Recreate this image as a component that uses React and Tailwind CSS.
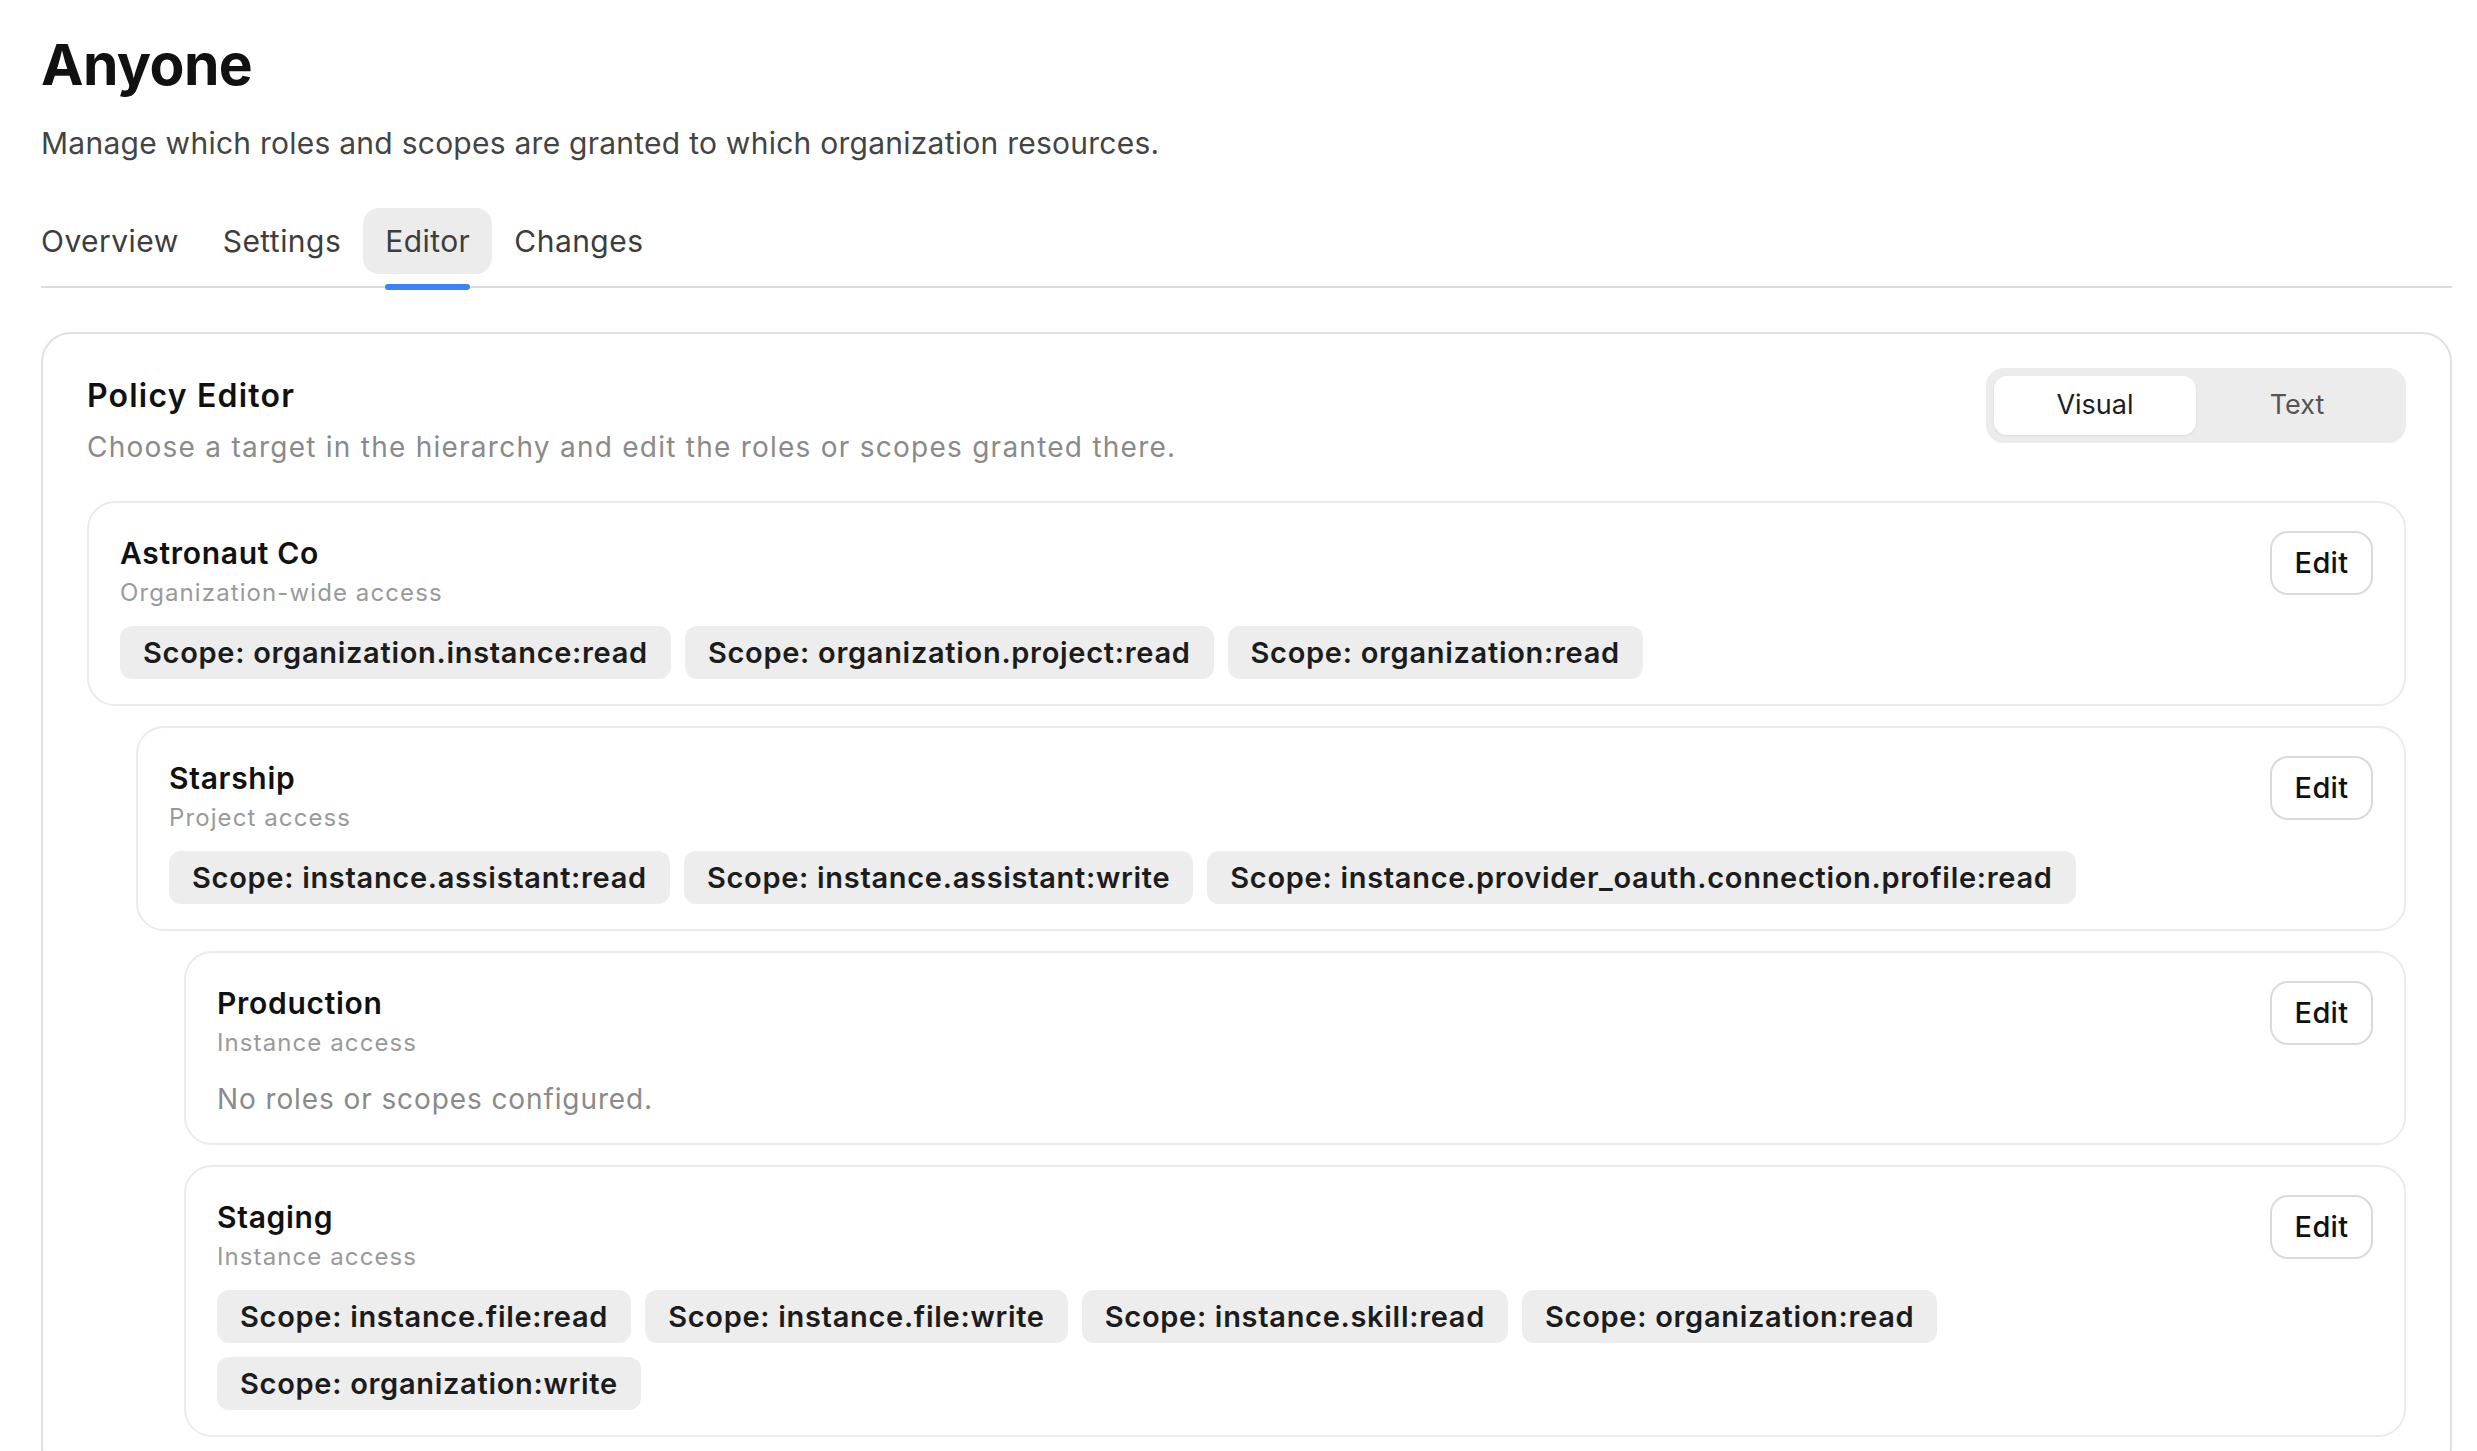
const tabs = ['Overview', 'Settings', 'Editor', 'Changes'];

const nodes = [
  {
    name: 'Astronaut Co',
    kind: 'Organization-wide access',
    level: 0,
    scopes: ['organization.instance:read', 'organization.project:read', 'organization:read'],
  },
  {
    name: 'Starship',
    kind: 'Project access',
    level: 1,
    scopes: [
      'instance.assistant:read',
      'instance.assistant:write',
      'instance.provider_oauth.connection.profile:read',
    ],
  },
  { name: 'Production', kind: 'Instance access', level: 2, scopes: [] },
  {
    name: 'Staging',
    kind: 'Instance access',
    level: 2,
    scopes: [
      'instance.file:read',
      'instance.file:write',
      'instance.skill:read',
      'organization:read',
      'organization:write',
    ],
  },
];

const indent = ['ml-0', 'ml-[49px]', 'ml-[97px]'];

function NodeCard({ node }) {
  return (
    <div
      className={`${indent[node.level]} flex items-start gap-[24px] rounded-[28px] border-2 border-[#ebebeb] bg-white px-[31px] pt-[30px] pb-[25px]`}
    >
      <div className="min-w-0 flex-1">
        <div className="text-[30px] leading-[40px] font-semibold tracking-[0.7px] text-[#111]">{node.name}</div>
        <div className="mt-[4px] text-[24px] leading-[32px] tracking-[1.1px] text-[#9a9a9a]">{node.kind}</div>
        {node.scopes.length ? (
          <div className="mt-[17px] flex flex-wrap gap-[14px]">
            {node.scopes.map((s) => (
              <span
                key={s}
                className="flex h-[53px] items-center rounded-[12px] bg-[#ededed] px-[23px] text-[29px] font-semibold tracking-[0.7px] text-[#1c1c1c]"
              >
                Scope: {s}
              </span>
            ))}
          </div>
        ) : (
          <p className="mt-[21px] text-[28px] leading-[38px] tracking-[0.9px] text-[#8a8a8a]">
            No roles or scopes configured.
          </p>
        )}
      </div>
      <button className="-mt-[2px] h-[64px] w-[103px] shrink-0 rounded-[18px] border-2 border-[#dadada] bg-white text-[29px] font-medium tracking-[0.3px] text-[#111]">
        Edit
      </button>
    </div>
  );
}

export default function App() {
  return (
    <div className="min-h-screen bg-white pt-[30px] pr-[25px] pl-[41px] font-['Inter','Noto_Sans',sans-serif] text-[#111]">
      <h1 className="text-[57px] leading-[70px] font-bold tracking-[-0.6px]">Anyone</h1>
      <p className="mt-[23px] text-[30px] leading-[40px] tracking-[0.25px] text-[#444]">
        Manage which roles and scopes are granted to which organization resources.
      </p>

      <nav className="mt-[45px] border-b-2 border-[#dcdcdc] pb-[12px]">
        <div className="-ml-[22px] flex">
          {tabs.map((t) => (
            <div
              key={t}
              className={`relative flex h-[66px] items-center rounded-[16px] px-[22px] text-[30px] tracking-[0.45px] text-[#3d3d3d] ${
                t === 'Editor' ? 'bg-[#ececec]' : ''
              }`}
            >
              {t}
              {t === 'Editor' && (
                <span className="absolute right-[22px] -bottom-[16px] left-[22px] h-[6px] rounded-full bg-[#3b82f6]" />
              )}
            </div>
          ))}
        </div>
      </nav>

      <section className="mt-[44px] rounded-[30px] border-2 border-[#e0e0e0] px-[44px] pt-[33px] pb-[40px]">
        <div className="flex items-start justify-between">
          <div>
            <h2 className="mt-[9px] text-[32px] leading-[40px] font-semibold tracking-[1.2px]">Policy Editor</h2>
            <p className="mt-[12px] text-[28px] leading-[38px] tracking-[1.25px] text-[#8a8a8a]">
              Choose a target in the hierarchy and edit the roles or scopes granted there.
            </p>
          </div>
          <div className="mt-[1px] flex h-[75px] w-[420px] rounded-[18px] bg-[#ececec] p-[8px]">
            <button className="flex-1 rounded-[13px] bg-white text-[27px] text-[#1d1d1d] shadow-[0_1px_3px_rgba(0,0,0,0.08)]">
              Visual
            </button>
            <button className="flex-1 text-[27px] text-[#555]">Text</button>
          </div>
        </div>

        <div className="mt-[35px] flex flex-col gap-[20px]">
          {nodes.map((n) => (
            <NodeCard key={n.name} node={n} />
          ))}
        </div>
      </section>
    </div>
  );
}
